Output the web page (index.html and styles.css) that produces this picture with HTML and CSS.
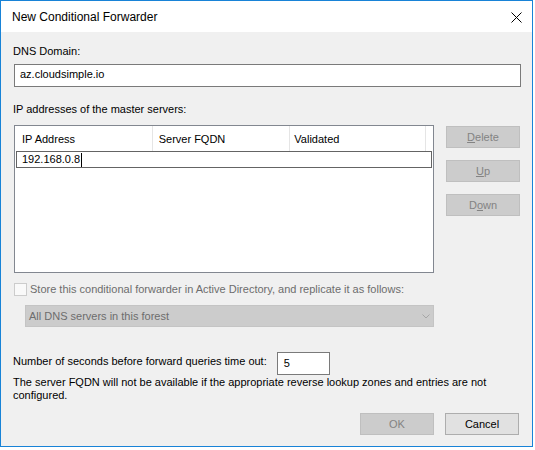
FILE: index.html
```html
<!DOCTYPE html>
<html lang="en">
<head>
<meta charset="utf-8">
<title>New Conditional Forwarder</title>
<link rel="stylesheet" href="styles.css">
</head>
<body>
<div class="window">
  <div class="titlebar">
    <span class="title">New Conditional Forwarder</span>
    <span class="close">
      <svg width="11" height="11" viewBox="0 0 11 11"><path d="M0.5 0.5L10.5 10.5M10.5 0.5L0.5 10.5" stroke="#000" stroke-width="1" fill="none"/></svg>
    </span>
  </div>
  <div class="content">
    <div class="label l-domain">DNS Domain:</div>
    <div class="textbox domain">az.cloudsimple.io</div>
    <div class="label l-ip">IP addresses of the master servers:</div>
    <div class="servers">
      <div class="listview">
        <div class="lv-header">
          <div class="col c1">IP Address</div>
          <div class="col c2">Server FQDN</div>
          <div class="col c3">Validated</div>
          <div class="col c4"></div>
        </div>
        <div class="lv-edit"><span class="ip">192.168.0.8</span><span class="caret"></span></div>
      </div>
      <div class="side-buttons">
        <div class="btn disabled"><u>D</u>elete</div>
        <div class="btn disabled"><u>U</u>p</div>
        <div class="btn disabled">D<u>o</u>wn</div>
      </div>
    </div>
    <div class="check-row">
      <span class="checkbox"></span>
      <span class="check-text">Store this conditional forwarder in Active Directory, and replicate it as follows:</span>
    </div>
    <div class="combo">
      <span>All DNS servers in this forest</span>
      <svg class="chevron" width="8" height="5" viewBox="0 0 8 5"><path d="M0.5 0.5L4 4L7.5 0.5" stroke="#a6a6a6" stroke-width="1" fill="none"/></svg>
    </div>
    <div class="timeout-row">
      <span class="label timeout-label">Number of seconds before forward queries time out:</span>
      <div class="textbox seconds">5</div>
    </div>
    <p class="note">The server FQDN will not be available if the appropriate reverse lookup zones and entries are not configured.</p>
    <div class="footer">
      <div class="btn disabled">OK</div>
      <div class="btn">Cancel</div>
    </div>
  </div>
</div>
</body>
</html>
```

FILE: styles.css
```css
* { box-sizing: border-box; }

html, body {
  margin: 0;
  padding: 0;
  background: #ffffff;
}

body {
  font-family: "Liberation Sans", Arial, sans-serif;
  font-size: 11px;
  line-height: 15px;
  color: #000;
}

.window {
  width: 533px;
  height: 447px;
  border: 1px solid #1883d7;
  display: flex;
  flex-direction: column;
}

/* white caption strip with title and close glyph */
.titlebar {
  height: 31px;
  background: #ffffff;
  display: flex;
  align-items: center;
  justify-content: space-between;
  padding-left: 11px;
  padding-right: 10px;
}

.title {
  font-size: 12px;
  padding-top: 2px;
}

.close {
  width: 11px;
  height: 11px;
  margin-top: 1px;
  display: flex;
}

.content {
  flex: 1;
  background: #f0f0f0;
  display: flex;
  flex-direction: column;
  padding: 12px 12px 11px 12px;
}

.label { display: block; }

.textbox {
  background: #ffffff;
  border: 1px solid #7a7a7a;
  display: flex;
  align-items: center;
}

.domain {
  height: 23px;
  margin: 5px 0 0 1px;
  padding: 0 0 2px 5px;
  width: 507px;
}

.l-ip { margin-top: 15px; }

.servers {
  display: flex;
  gap: 12px;
  margin-top: 8px;
  margin-left: 1px;
}

/* list view with column header and in-place edit row */
.listview {
  width: 420px;
  height: 148px;
  background: #ffffff;
  border: 1px solid #828790;
}

.lv-header {
  display: flex;
  height: 25px;
}

.col {
  display: flex;
  align-items: center;
  padding: 2px 0 0 7px;
  border-right: 1px solid #e5e5e5;
}
.c1 { width: 139px; }
.c2 { width: 139px; padding-left: 6px; }
.c3 { width: 137px; padding-left: 4px; }
.c4 { flex: 1; border-right: none; }

.lv-edit {
  margin-left: 1px;
  width: 416px;
  height: 17px;
  border: 1px solid #646464;
  display: flex;
  align-items: center;
  padding-left: 5px;
  font-size: 11px;
}

.caret {
  width: 1px;
  height: 14px;
  background: #000;
  margin-left: 1px;
}

.side-buttons {
  display: flex;
  flex-direction: column;
  gap: 12px;
  margin-top: 1px;
}

.btn {
  width: 74px;
  height: 22px;
  display: flex;
  align-items: center;
  justify-content: center;
  background: #e1e1e1;
  border: 1px solid #adadad;
}

.btn.disabled {
  background: #cccccc;
  border-color: #bfbfbf;
  color: #838383;
}

.check-row {
  display: flex;
  align-items: center;
  gap: 3px;
  height: 13px;
  margin-top: 10px;
  margin-left: 1px;
  color: #6d6d6d;
}

.checkbox {
  width: 13px;
  height: 13px;
  border: 1px solid #cccccc;
  background: #f9f9f9;
}

.combo {
  margin: 9px 0 0 12px;
  width: 409px;
  height: 22px;
  background: #cccccc;
  border: 1px solid #c4c4c4;
  color: #6d6d6d;
  display: flex;
  align-items: center;
  justify-content: space-between;
  padding: 0 3px 0 3px;
}

.timeout-row {
  display: flex;
  align-items: flex-start;
  margin-top: 25px;
}

.timeout-label { padding-top: 2px; }

.seconds {
  margin-left: 10px;
  width: 53px;
  height: 23px;
  padding-left: 6px;
}

.note {
  margin: 1px 0 0 0;
  line-height: 13px;
}

.footer {
  margin-top: auto;
  display: flex;
  justify-content: flex-end;
  gap: 11px;
  padding-right: 1px;
}
```
